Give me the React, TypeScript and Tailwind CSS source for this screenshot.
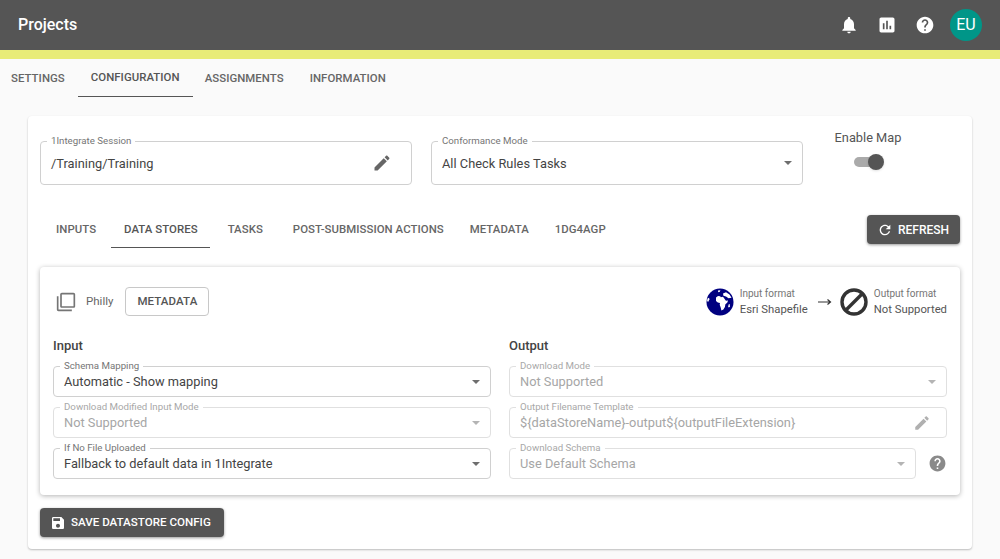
import type { ReactNode } from "react";

const EDIT = "M3 17.25V21h3.75L17.81 9.94l-3.75-3.75L3 17.25zM20.71 7.04c.39-.39.39-1.02 0-1.41l-2.34-2.34c-.39-.39-1.02-.39-1.41 0l-1.83 1.83 3.75 3.75 1.83-1.83z";
const HELP = "M12 2C6.48 2 2 6.48 2 12s4.48 10 10 10 10-4.48 10-10S17.52 2 12 2zm1 17h-2v-2h2v2zm2.07-7.75l-.9.92C13.45 12.9 13 13.5 13 15h-2v-.5c0-1.1.45-2.1 1.17-2.83l1.24-1.26c.37-.36.59-.86.59-1.41 0-1.1-.9-2-2-2s-2 .9-2 2H8c0-2.21 1.79-4 4-4s4 1.79 4 4c0 .88-.36 1.68-.93 2.25z";

function Icon({ d, className }: { d: string; className: string }) {
  return (
    <svg viewBox="0 0 24 24" fill="currentColor" className={className}>
      <path d={d} />
    </svg>
  );
}

function Caret({ disabled }: { disabled?: boolean }) {
  return (
    <div
      className={`h-0 w-0 border-x-[4.5px] border-t-[4.5px] border-x-transparent ${
        disabled ? "border-t-[#b4b4b4]" : "border-t-[#6e6e6e]"
      }`}
    />
  );
}

interface FieldProps {
  label: string;
  value: string;
  disabled?: boolean;
  tall?: boolean;
  trailing?: ReactNode;
  className?: string;
}

function Field({ label, value, disabled, tall, trailing, className }: FieldProps) {
  return (
    <div
      className={`relative flex items-center justify-between rounded border px-[10px] ${
        disabled ? "border-[#e0e0e0]" : "border-[#d0d0d0]"
      } ${tall ? "h-[44px]" : "h-[31px]"} ${className ?? ""}`}
    >
      <span
        className={`absolute top-[-7px] left-[6px] bg-white px-[4px] text-[9.7px] leading-[11px] ${
          disabled ? "text-[#a8a8a8]" : "text-[#757575]"
        }`}
      >
        {label}
      </span>
      <span
        className={`mt-[1px] whitespace-nowrap text-[12.8px] tracking-[0.02px] ${
          disabled ? "text-[#a6a6a6]" : "text-[#444444]"
        }`}
      >
        {value}
      </span>
      {trailing}
    </div>
  );
}

function Globe() {
  return (
    <svg viewBox="0 0 28 28" className="h-[28px] w-[28px]">
      <defs>
        <clipPath id="globe">
          <circle cx="14" cy="14" r="13.5" />
        </clipPath>
      </defs>
      <circle cx="14" cy="14" r="13.5" fill="#000080" />
      <g clipPath="url(#globe)" fill="#ffffff">
        <path d="M10 9.5l2-1.6 2.2.3.6 1 2.2-.4 1.3 1.6 1.6 2.4 2.2-.3-.9 2.2-1.8 1.6-.5 2.8-1.5 2.4-2 .9-.8-3.2-.9-2.4.3-1.8-2.2-.5-1.8-1.4z" />
        <path d="M22.6 16.5l1.1-.5.2 2.4-1.1 1.3-.5-1.5z" />
        <path d="M12 2.5l2.4-.2-.6 1.4-1.6.6z" />
        <path d="M17 5.5l3-1.2 3.5 2.2 2 3.2-3 .6-2.5-1.8-2.6-.8z" />
        <path d="M1.5 10.5l1.6-.8.3 1.8-1.3 2.4-1-1z" />
      </g>
    </svg>
  );
}

const TOP_TABS = [
  { label: "SETTINGS", cls: "pl-[11px] pr-[13px]" },
  { label: "CONFIGURATION", cls: "pl-[13px] pr-[13px]" },
  { label: "ASSIGNMENTS", cls: "pl-[12px] pr-[13px]" },
  { label: "INFORMATION", cls: "pl-[13px] pr-[13px]" },
];

const INNER_TABS = [
  { label: "INPUTS", cls: "pl-[13px] pr-[15px]" },
  { label: "DATA STORES", cls: "pl-[13px] pr-[12px]" },
  { label: "TASKS", cls: "pl-[18px] pr-[15px]" },
  { label: "POST-SUBMISSION ACTIONS", cls: "pl-[15px] pr-[13px]" },
  { label: "METADATA", cls: "pl-[13px] pr-[13px]" },
  { label: "1DG4AGP", cls: "pl-[13px] pr-[13px]" },
];

export default function App() {
  return (
    <div className="h-[559px] w-[1000px] overflow-hidden bg-[#fafafa] font-['Roboto',sans-serif]">
      {/* Header */}
      <header className="flex h-[50px] items-center justify-between bg-[#555555] pl-[18px] pr-[18px] text-white">
        <h1 className="text-[16px] font-medium">Projects</h1>
        <div className="flex items-center">
          <Icon
            className="h-[20px] w-[20px]"
            d="M12 22c1.1 0 2-.9 2-2h-4c0 1.1.89 2 2 2zm6-6v-5c0-3.07-1.64-5.64-4.5-6.32V4c0-.83-.67-1.5-1.5-1.5s-1.5.67-1.5 1.5v.68C7.63 5.36 6 7.92 6 11v5l-2 2v1h16v-1l-2-2z"
          />
          <Icon
            className="ml-[18px] h-[20px] w-[20px]"
            d="M19 3H5c-1.1 0-2 .9-2 2v14c0 1.1.9 2 2 2h14c1.1 0 2-.9 2-2V5c0-1.1-.9-2-2-2zM9 17H7v-7h2v7zm4 0h-2V7h2v10zm4 0h-2v-4h2v4z"
          />
          <Icon className="ml-[18px] h-[20px] w-[20px]" d={HELP} />
          <div className="ml-[15px] flex h-[32px] w-[32px] items-center justify-center rounded-full bg-[#009688] text-[16px]">
            EU
          </div>
        </div>
      </header>
      <div className="h-[9px] bg-[#e8ec78]" />

      {/* Top tabs */}
      <nav className="flex h-[38px]">
        {TOP_TABS.map((t, i) => (
          <div
            key={t.label}
            className={`flex items-center pt-[1px] text-[11.4px] font-medium tracking-[0.05px] ${t.cls} ${
              i === 1 ? "border-b border-[#555555] text-[#555555]" : "text-[#666666]"
            }`}
          >
            {t.label}
          </div>
        ))}
      </nav>

      {/* Main card */}
      <main className="mx-[28px] mt-[19px] h-[433px] rounded bg-white px-[12px] pt-[25px] shadow-[0_1px_2px_rgba(0,0,0,0.25)]">
        <div className="flex">
          <Field
            tall
            label="1Integrate Session"
            value="/Training/Training"
            className="w-[372px]"
            trailing={<Icon d={EDIT} className="mr-[9px] h-[20px] w-[20px] text-[#666666]" />}
          />
          <Field
            tall
            label="Conformance Mode"
            value="All Check Rules Tasks"
            className="ml-[19px] w-[372px]"
            trailing={<Caret />}
          />
          <div className="flex w-[130px] flex-col items-center">
            <span className="mt-[-12px] text-[12.8px] leading-[18px] text-[#555555]">Enable Map</span>
            <div className="relative mt-[10px] h-[10px] w-[29px] rounded-full bg-[#aaaaaa]">
              <div className="absolute top-[-3px] right-[-1px] h-[16px] w-[16px] rounded-full bg-[#555555] shadow-sm" />
            </div>
          </div>
        </div>

        {/* Inner tabs */}
        <div className="mt-[24px] flex h-[39px] items-start justify-between">
          <div className="ml-[3px] flex h-[39px]">
            {INNER_TABS.map((t, i) => (
              <div
                key={t.label}
                className={`flex items-center pt-[3px] text-[11.4px] font-medium tracking-[0.05px] ${t.cls} ${
                  i === 1 ? "border-b border-[#555555] text-[#555555]" : "text-[#666666]"
                }`}
              >
                {t.label}
              </div>
            ))}
          </div>
          <button className="mt-[6px] flex h-[29px] w-[93px] items-center justify-center rounded bg-[#555555] pr-[1px] text-[12px] font-medium text-white shadow-[0_1px_3px_rgba(0,0,0,0.4)]">
            <Icon
              d="M17.65 6.35C16.2 4.9 14.21 4 12 4c-4.42 0-7.99 3.58-7.99 8s3.57 8 7.99 8c3.73 0 6.84-2.55 7.73-6h-2.08c-.82 2.33-3.04 4-5.65 4-3.31 0-6-2.69-6-6s2.69-6 6-6c1.66 0 3.14.69 4.22 1.78L13 11h7V4l-2.35 2.35z"
              className="mr-[5px] h-[16px] w-[16px]"
            />
            REFRESH
          </button>
        </div>

        {/* Data store card */}
        <section className="mt-[19px] h-[228px] rounded bg-white px-[13px] pt-[20px] shadow-[0_1px_5px_rgba(0,0,0,0.3)]">
          <div className="flex h-[29px] items-center justify-between">
            <div className="flex items-center">
              <Icon
                d="M3 5H1v16c0 1.1.9 2 2 2h16v-2H3V5zm18-4H7c-1.1 0-2 .9-2 2v14c0 1.1.9 2 2 2h14c1.1 0 2-.9 2-2V3c0-1.1-.9-2-2-2zm0 16H7V3h14v14z"
                className="ml-[3px] h-[20px] w-[20px] text-[#757575]"
              />
              <span className="ml-[10px] text-[11.5px] text-[#666666]">Philly</span>
              <button className="ml-[12px] flex h-[29px] w-[84px] items-center justify-center rounded border border-[#c8c8c8] text-[11.5px] font-medium tracking-[0.1px] text-[#555555]">
                METADATA
              </button>
            </div>
            <div className="flex items-center">
              <Globe />
              <div className="ml-[6px] mt-[2px] flex flex-col">
                <span className="text-[10px] leading-[14px] text-[#757575]">Input format</span>
                <span className="mt-[1px] text-[11.3px] leading-[16px] text-[#555555]">Esri Shapefile</span>
              </div>
              <svg viewBox="0 0 16 10" className="ml-[9px] h-[10px] w-[16px] text-[#333333]">
                <path d="M1 5h12M10.5 2.5L13.5 5l-3 2.5" fill="none" stroke="currentColor" strokeWidth="1.2" />
              </svg>
              <svg viewBox="0 0 28 28" className="ml-[7px] h-[28px] w-[28px] text-[#333333]">
                <circle cx="14" cy="14" r="12" fill="none" stroke="currentColor" strokeWidth="3.4" />
                <path d="M5.5 22.5l17-17" stroke="currentColor" strokeWidth="3.4" />
              </svg>
              <div className="ml-[6px] mt-[2px] flex flex-col">
                <span className="text-[10px] leading-[14px] text-[#757575]">Output format</span>
                <span className="mt-[1px] text-[11.3px] leading-[16px] text-[#555555]">Not Supported</span>
              </div>
            </div>
          </div>

          <div className="mt-[21px] grid grid-cols-[438px_438px] gap-x-[18px]">
            <div>
              <h2 className="text-[13px] font-medium leading-[18px] text-[#444444]">Input</h2>
              <div className="mt-[11px] flex flex-col gap-[10px]">
                <Field label="Schema Mapping" value="Automatic - Show mapping" trailing={<Caret />} />
                <Field disabled label="Download Modified Input Mode" value="Not Supported" trailing={<Caret disabled />} />
                <Field label="If No File Uploaded" value="Fallback to default data in 1Integrate" trailing={<Caret />} />
              </div>
            </div>
            <div>
              <h2 className="text-[13px] font-medium leading-[18px] text-[#444444]">Output</h2>
              <div className="mt-[11px] flex flex-col gap-[10px]">
                <Field disabled label="Download Mode" value="Not Supported" trailing={<Caret disabled />} />
                <Field
                  disabled
                  label="Output Filename Template"
                  value="${dataStoreName}-output${outputFileExtension}"
                  trailing={<Icon d={EDIT} className="mr-[5px] h-[18px] w-[18px] text-[#b0b0b0]" />}
                />
                <div className="flex items-center">
                  <Field
                    disabled
                    label="Download Schema"
                    value="Use Default Schema"
                    trailing={<Caret disabled />}
                    className="w-[407px]"
                  />
                  <Icon d={HELP} className="ml-[12px] h-[19px] w-[19px] text-[#8a8a8a]" />
                </div>
              </div>
            </div>
          </div>
        </section>

        <button className="mt-[13px] flex h-[29px] w-[184px] items-center rounded bg-[#555555] pl-[10px] text-[11.6px] font-medium text-white shadow-[0_1px_3px_rgba(0,0,0,0.4)]">
          <Icon
            d="M17 3H5c-1.11 0-2 .9-2 2v14c0 1.1.89 2 2 2h14c1.1 0 2-.9 2-2V7l-4-4zm-5 16c-1.66 0-3-1.34-3-3s1.34-3 3-3 3 1.34 3 3-1.34 3-3 3zm3-10H5V5h10v4z"
            className="mr-[5px] h-[16px] w-[16px]"
          />
          SAVE DATASTORE CONFIG
        </button>
      </main>
    </div>
  );
}
